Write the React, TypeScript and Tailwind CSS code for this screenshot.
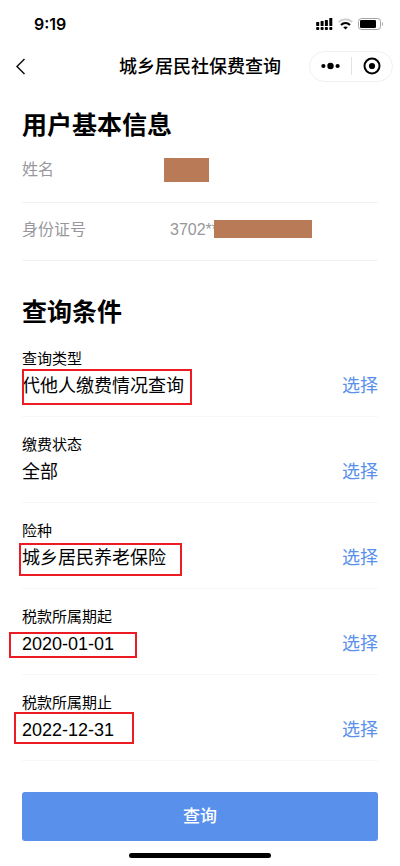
import { useState } from 'react';

type Condition = {
  id: string;
  label: string;
  value: string;
  // red marker drawn around the value
  mark?: string;
};

const conditions: Condition[] = [
  {
    id: 'type',
    label: '查询类型',
    value: '代他人缴费情况查询',
    mark: '-top-0.5 left-0 h-9 w-[170px]',
  },
  { id: 'status', label: '缴费状态', value: '全部' },
  {
    id: 'insurance',
    label: '险种',
    value: '城乡居民养老保险',
    mark: 'top-0 -left-[3px] h-[33px] w-[163px]',
  },
  {
    id: 'start',
    label: '税款所属期起',
    value: '2020-01-01',
    mark: 'top-[3px] -left-[13px] h-[26px] w-[128px]',
  },
  {
    id: 'end',
    label: '税款所属期止',
    value: '2022-12-31',
    mark: '-top-[3px] -left-2 h-8 w-[120px]',
  },
];

const StatusBar = () => (
  <div className="flex h-12 items-center justify-between pr-4 pl-[34px]">
    <span className="font-['Inter',sans-serif] text-base font-semibold">9:19</span>
    <div className="flex items-center gap-[5px]">
      <svg width="17" height="12" viewBox="0 0 17 12" aria-hidden="true">
        <rect x="0.2" y="4" width="3" height="4" rx="0.5" />
        <rect x="4.6" y="3" width="3" height="5" rx="0.5" />
        <rect x="8.9" y="2" width="3" height="6" rx="0.5" />
        <rect x="13.3" y="0" width="3" height="8" rx="0.5" />
        <rect x="0.2" y="8.9" width="3" height="3.1" rx="0.8" />
        <rect x="4.6" y="8.9" width="3" height="3.1" rx="0.8" />
        <rect x="8.9" y="8.9" width="3" height="3.1" rx="0.8" />
        <rect x="13.3" y="8.9" width="3" height="3.1" rx="0.8" />
      </svg>
      <svg width="15" height="12" viewBox="0 0 15 12" fill="none" aria-hidden="true">
        <path d="M0.8 4C4.6 0.4 10.4 0.4 14.2 4" stroke="#d2d2d2" strokeWidth="2.2" />
        <path d="M3 7C5.6 4.5 9.4 4.5 12 7" stroke="#000" strokeWidth="2.2" />
        <path d="M5.2 9.2c1.3-1.1 3.3-1.1 4.6 0L7.5 11.6z" fill="#000" />
      </svg>
      <svg width="26" height="12" viewBox="0 0 26 12" fill="none" aria-hidden="true">
        <rect x="0.5" y="0.5" width="22" height="11" rx="3" stroke="#a3a3a3" />
        <rect x="2" y="2" width="16" height="8" rx="1.2" fill="#000" />
        <path d="M24 4v4c1.4-0.6 1.4-3.4 0-4z" fill="#a3a3a3" />
      </svg>
    </div>
  </div>
);

const NavBar = () => (
  <header className="grid h-9 grid-cols-[1fr_auto_1fr] items-center px-[7px]">
    <button type="button" aria-label="返回" className="justify-self-start px-2">
      <svg width="11" height="17" viewBox="0 0 11 17" fill="none" aria-hidden="true">
        <path d="M9.5 1L2 8.5L9.5 16" stroke="#111" strokeWidth="1.5" />
      </svg>
    </button>
    <h1 className="pt-px text-lg font-medium">城乡居民社保费查询</h1>
    <div className="flex h-[31px] w-[84px] items-center justify-self-end rounded-full border border-[#f0f0f0]">
      <button type="button" aria-label="更多" className="flex flex-1 justify-center">
        <svg width="20" height="8" viewBox="0 0 20 8" aria-hidden="true">
          <circle cx="3.4" cy="4" r="2.1" />
          <circle cx="10.5" cy="4" r="3.2" />
          <circle cx="17.6" cy="4" r="2.1" />
        </svg>
      </button>
      <span className="h-[18px] w-px bg-[#e2e2e2]" />
      <button type="button" aria-label="关闭" className="flex flex-1 justify-center">
        <svg width="18" height="18" viewBox="0 0 18 18" aria-hidden="true">
          <circle cx="9" cy="9" r="7.5" fill="none" stroke="#000" strokeWidth="2" />
          <circle cx="9" cy="9" r="3.1" />
        </svg>
      </button>
    </div>
  </header>
);

const App = () => {
  const [selected, setSelected] = useState('');

  return (
    <div className="bg-white font-['Liberation_Sans','Noto_Sans_CJK_SC',sans-serif] text-black">
      <StatusBar />
      <NavBar />

      <main className="px-[22px] pt-[23px]">
        <section>
          <h2 className="text-[25px] leading-9 font-bold">用户基本信息</h2>
          <dl className="pt-0.5 text-base text-[#97979c]">
            <div className="flex h-[58px] items-center border-b border-[#f2f2f2] pb-2">
              <dt className="w-[142px]">姓名</dt>
              <dd className="h-6 w-[45px] bg-[#b97a57]" />
            </div>
            <div className="flex h-[58px] items-center border-b border-[#f2f2f2] pb-1">
              <dt className="w-[148px]">身份证号</dt>
              <dd className="relative">
                3702**
                <span className="absolute top-0.5 left-11 h-[18px] w-[98px] bg-[#b97a57]" />
              </dd>
            </div>
          </dl>
        </section>

        <section className="pt-[33px]">
          <h2 className="text-[25px] leading-9 font-bold">查询条件</h2>
          <div className="pt-px">
            {conditions.map((item) => (
              <div
                key={item.id}
                className="flex items-end justify-between border-b border-[#f7f7f7] pt-4 pb-[15px]"
              >
                <div>
                  <p className="text-[15px] leading-6">{item.label}</p>
                  <p className="relative text-lg leading-[30px]">
                    {item.value}
                    {item.mark && (
                      <span className={`absolute border-2 border-[#ed1c24] ${item.mark}`} />
                    )}
                  </p>
                </div>
                <button
                  type="button"
                  aria-pressed={selected === item.id}
                  onClick={() => setSelected(item.id)}
                  className="text-lg leading-[30px] text-[#5890ec]"
                >
                  选择
                </button>
              </div>
            ))}
          </div>
        </section>

        <button
          type="button"
          className="mt-[31px] h-[49px] w-full rounded-[3px] bg-[#5890ec] pt-px text-[17px] font-medium text-white"
        >
          查询
        </button>
      </main>

      <div className="mx-auto mt-3 mb-2 h-[5px] w-[142px] rounded-full bg-black" />
    </div>
  );
};

export default App;
